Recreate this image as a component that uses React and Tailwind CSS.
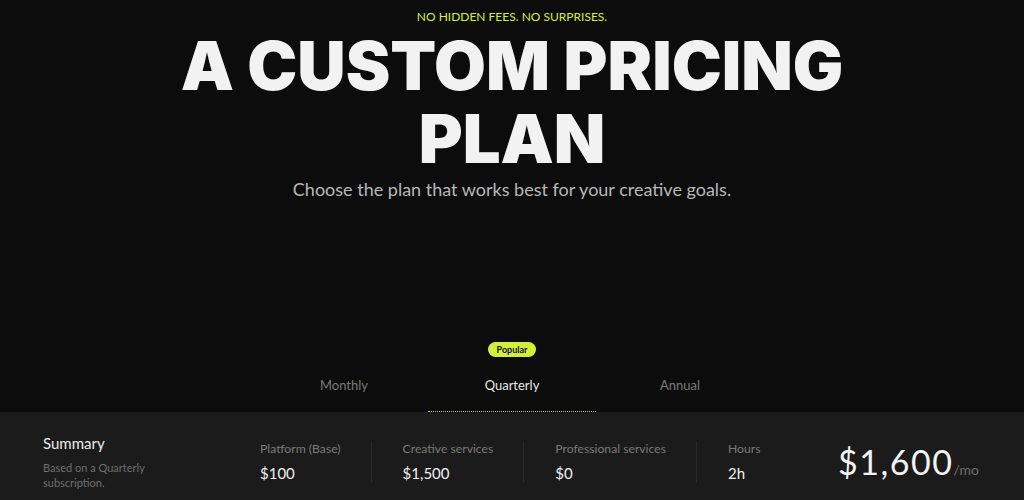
import React, { useState } from "react"

function App() {
  const [plan, setPlan] = useState("Quarterly")
  const plans = ["Monthly", "Quarterly", "Annual"]

  const items = [
    { label: "Platform (Base)", value: "$100" },
    { label: "Creative services", value: "$1,500" },
    { label: "Professional services", value: "$0" },
    { label: "Hours", value: "2h" },
  ]

  return (
    <div className="min-h-[500px] bg-[#0c0c0c] flex flex-col font-['Lato',sans-serif]">
      <div className="pt-[9px] text-center">
        <p className="text-[12px] leading-[16px] text-[#d2ef3a]">
          NO HIDDEN FEES. NO SURPRISES.
        </p>
        <h1 className="mt-[4px] font-['Inter',sans-serif] font-black text-[67px] leading-[73px] tracking-normal text-[#f2f2f2]">
          A CUSTOM PRICING
          <br />
          PLAN
        </h1>
        <p className="mt-[2px] text-[18px] leading-[24px] text-[#b8b8b8]">
          Choose the plan that works best for your creative goals.
        </p>
      </div>

      <div className="mt-[141px] w-[504px] mx-auto">
        <div className="flex justify-center">
          <span className="h-[15px] px-[9px] rounded-full bg-[#d2ef3a] text-[9px] leading-[15px] font-bold text-[#111]">
            Popular
          </span>
        </div>
        <div className="mt-[19px] grid grid-cols-3">
          {plans.map((p) => (
            <button
              key={p}
              onClick={() => setPlan(p)}
              className={
                "pb-[17px] text-[13px] leading-[18px] border-b border-dotted " +
                (plan === p
                  ? "text-[#e8e8e8] border-[#b7d035]"
                  : "text-[#7a7a7a] border-transparent")
              }
            >
              {p}
            </button>
          ))}
        </div>
      </div>

      <div className="flex-1 bg-[#1b1b1b] px-[43px] flex items-start">
        <div className="w-[217px] pt-[21px] shrink-0">
          <h3 className="text-[15px] leading-[20px] text-[#ececec]">Summary</h3>
          <p className="mt-[7px] w-[110px] text-[11px] leading-[15px] text-[#6f6f6f]">
            Based on a Quarterly subscription.
          </p>
        </div>
        <div className="flex pt-[29px]">
          {items.map((it, i) => (
            <div
              key={it.label}
              className={
                "pr-[30px] " + (i > 0 ? "pl-[31px] border-l border-[#2a2a2a]" : "")
              }
            >
              <div className="text-[12.2px] leading-[16px] text-[#7a7a7a]">{it.label}</div>
              <div className="mt-[6px] text-[15px] leading-[20px] text-[#f0f0f0]">{it.value}</div>
            </div>
          ))}
        </div>
        <div className="ml-auto mr-[2px] pt-[30px] flex items-baseline">
          <span className="text-[34px] leading-[40px] font-normal text-[#f2f2f2] tracking-[0.045em]">
            $1,600
          </span>
          <span className="text-[14px] text-[#6f6f6f]">/mo</span>
        </div>
      </div>
    </div>
  )
}

export default App
